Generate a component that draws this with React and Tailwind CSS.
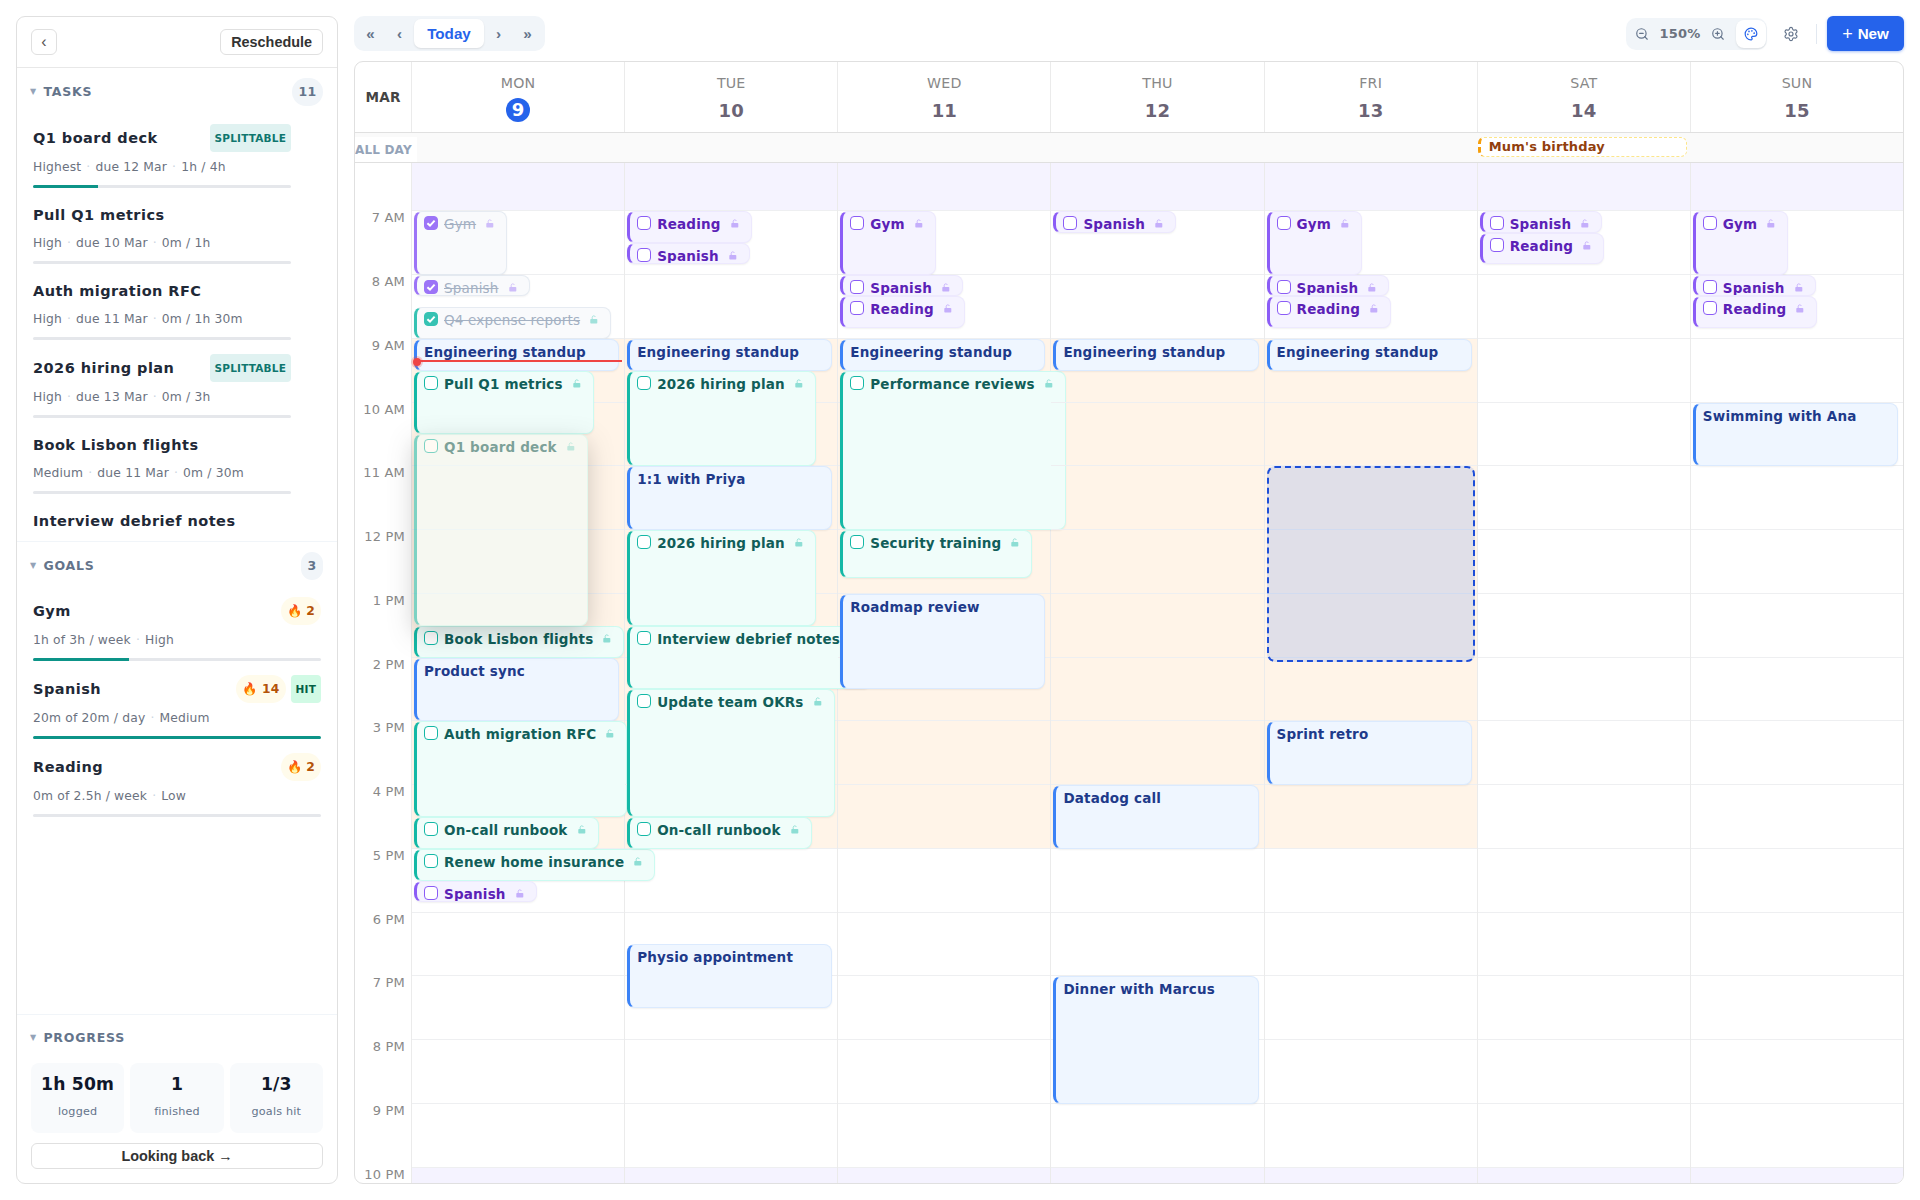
import clsx from "clsx";
import { Palette, Settings, ZoomIn, ZoomOut } from "lucide-react";

const HOUR = 63.75;
const START = 7;

const tasks = [
  { title: "Q1 board deck", meta: ["Highest", "due 12 Mar", "1h / 4h"], progress: 25, splittable: true },
  { title: "Pull Q1 metrics", meta: ["High", "due 10 Mar", "0m / 1h"], progress: 0 },
  { title: "Auth migration RFC", meta: ["High", "due 11 Mar", "0m / 1h 30m"], progress: 0 },
  { title: "2026 hiring plan", meta: ["High", "due 13 Mar", "0m / 3h"], progress: 0, splittable: true },
  { title: "Book Lisbon flights", meta: ["Medium", "due 11 Mar", "0m / 30m"], progress: 0 },
  { title: "Interview debrief notes" },
];

const goals = [
  { title: "Gym", meta: ["1h of 3h / week", "High"], streak: 2, progress: 33.3 },
  { title: "Spanish", meta: ["20m of 20m / day", "Medium"], streak: 14, hit: true, progress: 100 },
  { title: "Reading", meta: ["0m of 2.5h / week", "Low"], streak: 2, progress: 0 },
];

const stats = [
  { value: "1h 50m", label: "logged" },
  { value: "1", label: "finished" },
  { value: "1/3", label: "goals hit" },
];

const hours = ["7 AM", "8 AM", "9 AM", "10 AM", "11 AM", "12 PM", "1 PM", "2 PM", "3 PM", "4 PM", "5 PM", "6 PM", "7 PM", "8 PM", "9 PM", "10 PM"];

// start / end are decimal hours
const days = [
  {
    name: "MON", date: 9, today: true, work: true,
    events: [
      { title: "Gym", kind: "goal", start: 7, end: 8, done: true },
      { title: "Spanish", kind: "goal", start: 8, end: 8.333, done: true },
      { title: "Q4 expense reports", kind: "task", start: 8.5, end: 9, done: true },
      { title: "Engineering standup", kind: "event", start: 9, end: 9.5 },
      { title: "Pull Q1 metrics", kind: "task", start: 9.5, end: 10.5 },
      { title: "Book Lisbon flights", kind: "task", start: 13.5, end: 14 },
      { title: "Product sync", kind: "event", start: 14, end: 15 },
      { title: "Auth migration RFC", kind: "task", start: 15, end: 16.5 },
      { title: "On-call runbook", kind: "task", start: 16.5, end: 17 },
      { title: "Renew home insurance", kind: "task", start: 17, end: 17.5 },
      { title: "Spanish", kind: "goal", start: 17.5, end: 17.833 },
      { title: "Q1 board deck", kind: "task", start: 10.5, end: 13.5, dragging: true },
    ],
  },
  {
    name: "TUE", date: 10, work: true,
    events: [
      { title: "Reading", kind: "goal", start: 7, end: 7.5 },
      { title: "Spanish", kind: "goal", start: 7.5, end: 7.833 },
      { title: "Engineering standup", kind: "event", start: 9, end: 9.5 },
      { title: "2026 hiring plan", kind: "task", start: 9.5, end: 11 },
      { title: "1:1 with Priya", kind: "event", start: 11, end: 12 },
      { title: "2026 hiring plan", kind: "task", start: 12, end: 13.5 },
      { title: "Interview debrief notes", kind: "task", start: 13.5, end: 14.5 },
      { title: "Update team OKRs", kind: "task", start: 14.5, end: 16.5 },
      { title: "On-call runbook", kind: "task", start: 16.5, end: 17 },
      { title: "Physio appointment", kind: "event", start: 18.5, end: 19.5 },
    ],
  },
  {
    name: "WED", date: 11, work: true,
    events: [
      { title: "Gym", kind: "goal", start: 7, end: 8 },
      { title: "Spanish", kind: "goal", start: 8, end: 8.333 },
      { title: "Reading", kind: "goal", start: 8.333, end: 8.833 },
      { title: "Engineering standup", kind: "event", start: 9, end: 9.5 },
      { title: "Performance reviews", kind: "task", start: 9.5, end: 12 },
      { title: "Security training", kind: "task", start: 12, end: 12.75 },
      { title: "Roadmap review", kind: "event", start: 13, end: 14.5 },
    ],
  },
  {
    name: "THU", date: 12, work: true,
    events: [
      { title: "Spanish", kind: "goal", start: 7, end: 7.333 },
      { title: "Engineering standup", kind: "event", start: 9, end: 9.5 },
      { title: "Datadog call", kind: "event", start: 16, end: 17 },
      { title: "Dinner with Marcus", kind: "event", start: 19, end: 21 },
    ],
  },
  {
    name: "FRI", date: 13, work: true, drop: { start: 11, end: 14 },
    events: [
      { title: "Gym", kind: "goal", start: 7, end: 8 },
      { title: "Spanish", kind: "goal", start: 8, end: 8.333 },
      { title: "Reading", kind: "goal", start: 8.333, end: 8.833 },
      { title: "Engineering standup", kind: "event", start: 9, end: 9.5 },
      { title: "Sprint retro", kind: "event", start: 15, end: 16 },
    ],
  },
  {
    name: "SAT", date: 14, allDay: "Mum's birthday",
    events: [
      { title: "Spanish", kind: "goal", start: 7, end: 7.333 },
      { title: "Reading", kind: "goal", start: 7.333, end: 7.833 },
    ],
  },
  {
    name: "SUN", date: 15,
    events: [
      { title: "Gym", kind: "goal", start: 7, end: 8 },
      { title: "Spanish", kind: "goal", start: 8, end: 8.333 },
      { title: "Reading", kind: "goal", start: 8.333, end: 8.833 },
      { title: "Swimming with Ana", kind: "event", start: 10, end: 11 },
    ],
  },
];

const kinds = {
  event: { box: "border-[#dbeafe] border-l-[#3b82f6] bg-[#eff6ff]", text: "text-[#1e3a8a]", check: "", fill: "", lock: "" },
  task: { box: "border-[#ccfbf1] border-l-[#14b8a6] bg-[#f0fdfa]", text: "text-[#115e59]", check: "border-[#14b8a6]", fill: "bg-[#14b8a6]", lock: "text-[#14b8a6]" },
  goal: { box: "border-[#ede9fe] border-l-[#8b5cf6] bg-[#f5f3ff]", text: "text-[#5b21b6]", check: "border-[#8b5cf6]", fill: "bg-[#8b5cf6]", lock: "text-[#8b5cf6]" },
};

const doneBox = {
  task: "border-[#e2e8f0] border-l-[#14b8a6] bg-[#f8fafc]",
  goal: "border-[#e2e8f0] border-l-[#8b5cf6] bg-[#f8fafc]",
};

const offset = (hour) => (hour - START) * HOUR + 47.3;

const LockIcon = ({ className }) => (
  <svg viewBox="0 0 8 9" className={clsx("h-[9px] w-2 shrink-0", className)} fill="none">
    <rect x="0.3" y="4" width="7" height="4.6" rx="0.8" fill="currentColor" />
    <path d="M2.2 4V2.4a1.6 1.6 0 0 1 3.1-.5" stroke="currentColor" strokeWidth="0.9" />
  </svg>
);

const CheckBox = ({ kind, done }) => (
  <span
    className={clsx(
      "flex h-3.5 w-3.5 shrink-0 items-center justify-center rounded border",
      kinds[kind].check,
      done ? kinds[kind].fill : "bg-white"
    )}
  >
    {done && (
      <svg viewBox="0 0 12 12" className="h-3 w-3 shrink-0" fill="none">
        <path d="M2.4 6.2 5 8.6 9.6 3.6" stroke="white" strokeWidth="2" />
      </svg>
    )}
  </span>
);

const EventBlock = ({ event }) => {
  const { title, kind, start, end, done, dragging } = event;
  const style = kinds[kind];
  const isTask = kind !== "event";
  return (
    <div
      className={clsx(
        "absolute left-[2px] flex items-start overflow-hidden rounded-lg border border-l-[3px] pl-[7px]",
        done ? doneBox[kind] : style.box,
        done && "opacity-85",
        dragging ? "opacity-55 shadow-[0_8px_24px_rgba(0,0,0,0.35)]" : "shadow-[0_1px_2px_rgba(0,0,0,0.06)]",
        isTask ? "w-max" : "right-[5px]"
      )}
      style={{ top: offset(start) + 1, height: (end - start) * HOUR }}
    >
      {isTask && (
        <span className="mt-1 mr-[6px]">
          <CheckBox kind={kind} done={done} />
        </span>
      )}
      <span
        className={clsx(
          "text-[13.5px] leading-[25px] whitespace-nowrap",
          done ? "text-[#94a3b8] line-through" : ["font-bold", style.text]
        )}
      >
        {title}
      </span>
      {isTask && <LockIcon className={clsx("mt-[7px] mr-[12px] ml-[10px] opacity-45", style.lock)} />}
    </div>
  );
};

const NowLine = () => (
  <div className="absolute right-[2px] left-[2px] h-0.5 bg-[#ef4444]" style={{ top: 197 }}>
    <span className="absolute -top-[2px] -left-px h-2 w-2 rounded-full bg-[#ef4444] shadow-[0_0_0_2px_rgba(239,68,68,0.25)]" />
  </div>
);

const Meta = ({ parts }) => (
  <div className="mt-[3px] flex h-6 items-center text-[12.3px] text-[#6b7280]">
    {parts.map((part, i) => (
      <span key={part} className="whitespace-pre">
        {i > 0 && <span className="px-[5px] text-[#cbd5e1]">·</span>}
        {part}
      </span>
    ))}
  </div>
);

const ProgressBar = ({ value }) => (
  <div className="mt-[6px] h-[3px] overflow-hidden rounded-sm bg-[#e5e7eb]">
    <div className="h-full bg-[#0d9488]" style={{ width: `${value}%` }} />
  </div>
);

const SectionHeader = ({ title, count }) => (
  <div className={clsx("flex items-center pr-[14px] pl-[13px]", count ? "h-12" : "mb-[2px] h-[46px]")}>
    <span className="w-[13.4px] text-[8px] tracking-normal text-[#94a3b8]">▼</span>
    <span className="text-[12.5px] font-bold tracking-[0.8px] text-[#64748b]">{title}</span>
    {count && (
      <span className="ml-auto flex h-7 items-center rounded-full bg-[#f1f5f9] px-[6.7px] text-[12.5px] font-bold text-[#64748b]">
        {count}
      </span>
    )}
  </div>
);

const Sidebar = () => (
  <aside className="flex w-[322px] shrink-0 flex-col rounded-[9px] border border-[#e0e0e0] bg-white">
    <div className="flex h-[51px] shrink-0 items-center justify-between border-b border-[#e8e8e8] px-[14px]">
      <button className="flex h-[26px] w-[26px] items-center justify-center rounded-md border border-[#e0e0e0] font-['Liberation_Sans',sans-serif] text-[16px] tracking-normal text-[#555]">
        ‹
      </button>
      <button className="h-[26px] rounded-md border border-[#e0e0e0] px-[10px] font-['Liberation_Sans',sans-serif] text-[14.4px] leading-6 font-bold tracking-normal text-[#333]">
        Reschedule
      </button>
    </div>

    <section className="h-[474px] shrink-0 overflow-hidden border-b border-[#f1f5f9]">
      <SectionHeader title="TASKS" count="11" />
      <div className="flex flex-col gap-[14px] pt-2 pr-[46px] pl-4">
        {tasks.map((task) => (
          <div key={task.title}>
            <div className="flex min-h-[26px] items-center justify-between">
              <span className="text-[14.5px] font-bold tracking-[0.46px] text-[#1f2937]">{task.title}</span>
              {task.splittable && (
                <span className="flex h-7 items-center rounded bg-[#e0f2f1] px-[5px] text-[10.5px] font-bold text-[#0f766e]">
                  SPLITTABLE
                </span>
              )}
            </div>
            {task.meta && (
              <>
                <Meta parts={task.meta} />
                <ProgressBar value={task.progress} />
              </>
            )}
          </div>
        ))}
      </div>
    </section>

    <section className="h-[473px] shrink-0 overflow-hidden border-b border-[#f1f5f9]">
      <SectionHeader title="GOALS" count="3" />
      <div className="flex flex-col gap-[14px] px-4 pt-[7px]">
        {goals.map((goal) => (
          <div key={goal.title}>
            <div className="flex h-7 items-center">
              <span className="mr-auto text-[14.5px] font-bold tracking-[0.46px] text-[#1f2937]">{goal.title}</span>
              <span className="flex h-7 items-center rounded-full bg-[#fffbeb] px-[6px] text-[12.3px] font-bold whitespace-pre text-[#b45309]">
                🔥 {goal.streak}
              </span>
              {goal.hit && (
                <span className="ml-[5px] flex h-7 items-center rounded bg-[#d1fae5] px-[5px] text-[10.5px] font-bold text-[#065f46]">
                  HIT
                </span>
              )}
            </div>
            <Meta parts={goal.meta} />
            <ProgressBar value={goal.progress} />
          </div>
        ))}
      </div>
    </section>

    <section className="flex flex-1 flex-col">
      <SectionHeader title="PROGRESS" />
      <div className="grid grid-cols-3 gap-[6px] px-[14px]">
        {stats.map((stat) => (
          <div key={stat.label} className="flex h-[70px] flex-col items-center rounded-lg bg-[#f8fafc] pt-[9px]">
            <span className="text-[17.2px] leading-6 font-bold text-[#0f172a]">{stat.value}</span>
            <span className="mt-1 text-[11.2px] leading-6 text-[#64748b]">{stat.label}</span>
          </div>
        ))}
      </div>
      <button className="mx-[14px] mt-[10px] h-[26px] rounded-md border border-[#e0e0e0] font-['Liberation_Sans',sans-serif] text-[14.4px] leading-6 font-bold tracking-normal text-[#333]">
        Looking back →
      </button>
    </section>
  </aside>
);

const navButton = "flex h-[29px] w-[29px] items-center justify-center font-['Liberation_Sans',sans-serif] text-[15.2px] font-bold tracking-normal text-[#64748b]";

const Toolbar = () => (
  <div className="flex h-[35px] items-center justify-between">
    <div className="flex h-[35px] items-center rounded-[10px] bg-[#f1f5f9] pr-[3px] pl-[2px]">
      <button className={navButton}>«</button>
      <button className={navButton}>‹</button>
      <button className="h-[29px] w-[70px] rounded-[7px] bg-white font-['Liberation_Sans',sans-serif] text-[15.2px] font-bold tracking-normal text-[#2563eb] shadow-[0_1px_2px_rgba(0,0,0,0.1)]">
        Today
      </button>
      <button className={navButton}>›</button>
      <button className={navButton}>»</button>
    </div>

    <div className="flex items-center">
      <div className="flex h-8 items-center rounded-[10px] bg-[#f1f5f9] pr-px pl-[9px]">
        <ZoomOut className="h-3.5 w-3.5 text-[#64748b]" />
        <span className="w-[62px] text-center text-[13px] font-bold text-[#6b7280]">150%</span>
        <ZoomIn className="h-3.5 w-3.5 text-[#64748b]" />
        <button className="ml-[11px] flex h-7 w-[30px] items-center justify-center rounded-lg bg-white text-[#2563eb] shadow-[0_1px_2px_rgba(0,0,0,0.1)]">
          <Palette className="h-3.5 w-3.5" />
        </button>
      </div>
      <Settings className="ml-4 h-4 w-4 text-[#64748b]" strokeWidth={1.75} />
      <span className="mr-[10px] ml-[17px] h-5 w-px bg-[#e2e8f0]" />
      <button className="flex h-[35px] w-[77px] items-center justify-center gap-[5px] rounded-md bg-[#2563eb] font-['Liberation_Sans',sans-serif] text-[15.2px] font-bold tracking-normal text-white shadow-[0_1px_3px_rgba(37,99,235,0.4)]">
        <span className="text-[18px] leading-none font-normal">+</span>
        New
      </button>
    </div>
  </div>
);

const Calendar = () => (
  <div className="mt-[10px] flex min-h-0 flex-1 flex-col overflow-hidden rounded-[9px] border border-[#e0e0e0] bg-white">
    <div className="flex h-[71px] shrink-0 border-b border-[#e0e0e0]">
      <div className="flex w-14 shrink-0 items-center justify-center text-[13.6px] font-bold text-[#444]">MAR</div>
      <div className="grid flex-1 grid-cols-7">
        {days.map((day) => (
          <div key={day.name} className="flex flex-col items-center border-l border-[#ebebeb] pt-[9px]">
            <span className="text-[14.2px] leading-6 text-[#888]">{day.name}</span>
            <span
              className={clsx(
                "mt-[3px] flex h-6 items-center justify-center text-[18px] font-bold",
                day.today ? "w-6 rounded-full bg-[#2563eb] text-white" : "pt-px text-[#6b6375]"
              )}
            >
              {day.date}
            </span>
          </div>
        ))}
      </div>
    </div>

    <div className="flex h-[30px] shrink-0 border-b border-[#e0e0e0] bg-[#fafafa] pt-1">
      <div className="w-[62px] shrink-0 bg-white text-[12px] leading-[26px] font-bold whitespace-nowrap text-[#94a3b8]">ALL DAY</div>
      <div className="-ml-[6px] grid flex-1 grid-cols-7">
        {days.map((day) => (
          <div key={day.name} className="pr-[3px] pl-px">
            {day.allDay && (
              <div className="h-5 rounded-md border border-l-[3px] border-dashed border-[#fde68a] border-l-[#f59e0b] bg-white pl-2 text-[13px] leading-[18px] font-bold text-[#92400e]">
                {day.allDay}
              </div>
            )}
          </div>
        ))}
      </div>
    </div>

    <div className="relative flex min-h-0 flex-1 overflow-hidden">
      <div className="w-14 shrink-0 pt-[47.4px]">
        {hours.map((hour) => (
          <div key={hour} className="h-[63.75px] pr-[6px] text-right text-[13px] leading-[15px] text-[#888]">
            {hour}
          </div>
        ))}
      </div>
      <div className="grid flex-1 grid-cols-7">
        {days.map((day) => (
          <div key={day.name} className="h-[1020px] overflow-hidden border-l border-[#ebebeb]">
            <div className="h-[47.3px] bg-[#f5f3ff]" />
            <div className="h-[127.5px]" />
            <div className={clsx("h-[510px]", day.work && "bg-[#fff4e8]")} />
            <div className="h-[318.75px]" />
            <div className="h-10 bg-[#f5f3ff]" />
          </div>
        ))}
      </div>

      {/* hour lines and events sit over the shaded zones */}
      <div className="absolute inset-y-0 right-0 left-14 grid grid-cols-7">
        {days.map((day) => (
          <div key={day.name} className="relative border-l border-transparent">
            <div className="absolute inset-0 overflow-hidden pt-[47.3px]">
              {hours.map((hour) => (
                <div key={hour} className="h-[63.75px] border-t border-[#eeeff1]" />
              ))}
            </div>
            {day.events.map((event) => (
              <EventBlock key={event.title + event.start} event={event} />
            ))}
            {day.drop && (
              <div
                className="absolute right-[2px] left-[2px] rounded-lg border-2 border-dashed border-[#1d4ed8] bg-[#2563eb]/14"
                style={{ top: offset(day.drop.start) + 1, height: (day.drop.end - day.drop.start) * HOUR + 4 }}
              />
            )}
            {day.today && <NowLine />}
          </div>
        ))}
      </div>
    </div>
  </div>
);

export default function App() {
  return (
    <div className="flex h-[1200px] w-[1920px] gap-4 overflow-hidden bg-white p-4 font-['DejaVu_Sans',sans-serif] leading-6 tracking-[0.18px]">
      <Sidebar />
      <main className="flex min-w-0 flex-1 flex-col">
        <Toolbar />
        <Calendar />
      </main>
    </div>
  );
}
